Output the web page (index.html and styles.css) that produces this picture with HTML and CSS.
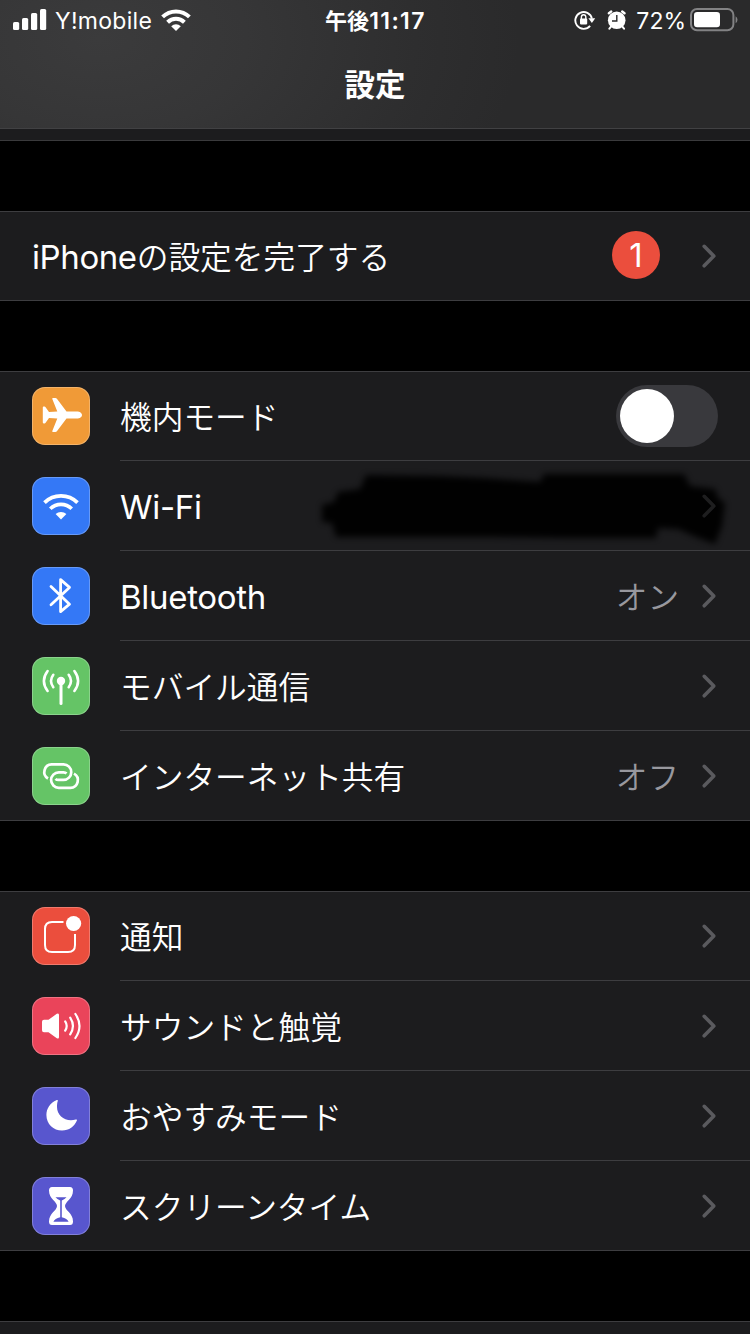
FILE: index.html
```html
<!DOCTYPE html>
<html lang="ja">
<head>
<meta charset="utf-8">
<title>設定</title>
<link rel="stylesheet" href="styles.css">
</head>
<body>
<svg class="defs" width="0" height="0">
  <symbol id="chevron" viewBox="0 0 16 26"><path d="M3.2 3.3 12.8 13.1 3.2 22.8" fill="none" stroke="currentColor" stroke-width="3.6" stroke-linecap="round" stroke-linejoin="round"/></symbol>
</svg>
<header class="header">
  <div class="status">
    <div class="status-left">
      <svg class="signal" width="34" height="22" viewBox="0 0 34 22" fill="#fff"><rect x="0" y="13" width="6.2" height="8" rx="1.6"/><rect x="9" y="9" width="6.2" height="12" rx="1.6"/><rect x="18" y="4" width="6.2" height="17" rx="1.6"/><rect x="27" y="0" width="6.2" height="21" rx="1.6"/></svg>
      <span class="carrier">Y!mobile</span>
      <svg class="wifi-small" width="30" height="22" viewBox="0 0 30 22"><g fill="none" stroke="#fff" stroke-width="4"><path d="M1.6 7.9A19.2 19.2 0 0 1 28.4 7.9"/><path d="M6.6 13.2A12 12 0 0 1 23.4 13.2"/></g><path d="M15 22 10.2 17.2A7 7 0 0 1 19.8 17.2Z" fill="#fff"/></svg>
    </div>
    <div class="clock"><span class="clock-ja">午後</span><span class="clock-time">11:17</span></div>
    <div class="status-right">
      <svg class="lock" width="22" height="20" viewBox="0 0 22 20"><path d="M16.1 15.9A8.4 8.4 0 1 1 17.9 8.6" fill="none" stroke="#fff" stroke-width="1.9"/><path d="M14.4 8.2H21.2L17.9 13Z" fill="#fff"/><rect x="6" y="8.6" width="7.2" height="5.8" rx=".8" fill="#fff"/><path d="M7.4 9V7a2.2 2.2 0 0 1 4.4 0V9" fill="none" stroke="#fff" stroke-width="1.4"/></svg>
      <svg class="alarm" width="20" height="20" viewBox="0 0 20 20"><circle cx="9.7" cy="10.3" r="8.800" fill="#fff"/><path d="M1.900 3.200 4.200 1.500M17.500 3.200 15.200 1.500" stroke="#fff" stroke-width="2.4" stroke-linecap="round"/><path d="M4 16.6 2.400 18.600M15.4 16.6 17 18.600" stroke="#fff" stroke-width="2" stroke-linecap="round"/><path d="M9.8 5V11H5" fill="none" stroke="#2b2b2c" stroke-width="1.4"/></svg>
      <span class="percent">72%</span>
      <svg class="battery" width="48" height="24" viewBox="0 0 48 24"><rect x="1" y="1" width="42.4" height="21.2" rx="6" fill="none" stroke="#828284" stroke-width="2"/><rect x="4" y="4" width="26" height="15.2" rx="3.2" fill="#fff"/><path d="M45.6 8.2a4.2 4.2 0 0 1 0 7Z" fill="#828284"/></svg>
    </div>
  </div>
  <h1 class="title">設定</h1>
</header>
<div class="strip"></div>

<main>
  <section class="group">
    <div class="row row-plain">
      <span class="label"><span class="latin latin-inline">iPhone</span>の設定を完了する</span>
      <span class="badge">1</span>
      <svg class="chevron"><use href="#chevron"/></svg>
    </div>
  </section>

  <section class="group">
    <div class="row">
      <svg class="icon orange" viewBox="0 0 58 58"><path fill="#fff" d="M21 11h2.3q1 0 1.6.8L34.5 24.4H45c2.700 0 5 1.600 5 3.600s-2.300 3.600-5 3.600H34.500L24.900 44.200q-.6.8-1.600.8H21q-1 0-.7-1L25.300 31.400 17 30.900 13.600 35.800q-.4.600-1.200.6H11.600q-.8 0-.8-.8V20.400q0-.8.8-.8h.8q.8 0 1.200.6L17 25.100 25.300 24.600 20.300 12q-.3-1 .7-1Z"/></svg>
      <div class="body"><span class="label">機内モード</span><span class="toggle"><span class="knob"></span></span></div>
    </div>
    <div class="row">
      <svg class="icon blue" viewBox="0 0 58 58"><g fill="none" stroke="#fff" stroke-width="3.700"><path d="M12.500 25.600A23.500 23.500 0 0 1 45.500 25.600"/><path d="M18.300 31.700A15.200 15.200 0 0 1 39.700 31.700"/></g><path d="M29 42.600 23.600 37.100A7.800 7.800 0 0 1 34.400 37.100Z" fill="#fff"/></svg>
      <div class="body"><span class="label latin">Wi-Fi</span>
        <svg class="scribble" viewBox="0 0 440 90"><g class="soft"><path d="M12 40 24 37 28 27 50 24 56 10 130 11 175 13 230 17 234 9 374 9 380 21 405 24 408 33 415 38 412 61 405 79 386 72 368 64 348 63 346 73 260 73 180 72 26 72 22 58 12 57Z"/></g></svg>
        <svg class="chevron covered"><use href="#chevron"/></svg>
      </div>
    </div>
    <div class="row">
      <svg class="icon blue" viewBox="0 0 58 58"><path d="M19 19.400 37.500 37.200 28.600 44.600V12.600L37.500 20.400 19 37.800" fill="none" stroke="#fff" stroke-width="2.800" stroke-linecap="round" stroke-linejoin="round"/></svg>
      <div class="body"><span class="label latin">Bluetooth</span><span class="value">オン</span><svg class="chevron"><use href="#chevron"/></svg></div>
    </div>
    <div class="row">
      <svg class="icon green" viewBox="0 0 58 58"><circle cx="29" cy="24" r="4.200" fill="#fff"/><g fill="none" stroke="#fff" stroke-linecap="round"><path d="M29 25V46.500" stroke-width="3"/><g stroke-width="2.600"><path d="M21.300 17.800Q16.700 24 21.300 30.200M36.700 17.800Q41.300 24 36.700 30.200M15.600 14Q8.200 24 15.600 34M42.400 14Q49.800 24 42.400 34"/></g></g></svg>
      <div class="body"><span class="label">モバイル通信</span><svg class="chevron"><use href="#chevron"/></svg></div>
    </div>
    <div class="row">
      <svg class="icon green" viewBox="0 0 58 58"><g fill="none" stroke="#fff" stroke-width="2.700"><path d="M16 31.500A7.600 7.600 0 0 1 19.600 17.400H31.500A7.600 7.600 0 0 1 31.500 32.900H26.500Q24.500 32.900 23.500 31.800"/><path d="M42 26.600A7.600 7.600 0 0 1 38.400 40.800H26.800A7.600 7.600 0 0 1 26.800 25.400H31.500Q33.500 25.400 34.500 26.500"/></g></svg>
      <div class="body"><span class="label">インターネット共有</span><span class="value">オフ</span><svg class="chevron"><use href="#chevron"/></svg></div>
    </div>
  </section>

  <section class="group">
    <div class="row">
      <svg class="icon red" viewBox="0 0 58 58"><path d="M31.500 14.900H20Q13 14.900 13 22V38Q13 45 20 45H36Q43 45 43 38V27" fill="none" stroke="#fff" stroke-width="2"/><circle cx="41.600" cy="16.500" r="7.600" fill="#fff"/></svg>
      <div class="body"><span class="label">通知</span><svg class="chevron"><use href="#chevron"/></svg></div>
    </div>
    <div class="row">
      <svg class="icon pink" viewBox="0 0 58 58"><path d="M12 22.800H16.500L24.800 16.800Q27 15.600 27 18V40Q27 42.400 24.800 41.200L16.500 35.200H12Q10 35.200 10 33.200V24.800Q10 22.800 12 22.800Z" fill="#fff"/><g fill="none" stroke="#fff" stroke-width="2.200" stroke-linecap="round"><path d="M33.200 24.400Q36.200 29 33.200 33.600M38.200 20.600Q43.700 29 38.200 37.400M43.400 17Q51.600 29 43.400 41"/></g></svg>
      <div class="body"><span class="label">サウンドと触覚</span><svg class="chevron"><use href="#chevron"/></svg></div>
    </div>
    <div class="row">
      <svg class="icon purple" viewBox="0 0 58 58"><path d="M24.800 13C17.600 16 14.400 22 14.400 28 14.400 37 21.600 43.600 30 43.600 37 43.600 42.600 39.500 44.900 33.600 45.200 32.600 44.600 32.200 43.800 32.500 34 35.500 25 29 25 20 25 17.500 25.200 15.800 25.800 14 26 13.200 25.500 12.700 24.800 13Z" fill="#fff"/></svg>
      <div class="body"><span class="label">おやすみモード</span><svg class="chevron"><use href="#chevron"/></svg></div>
    </div>
    <div class="row">
      <svg class="icon purple" viewBox="0 0 58 58"><path d="M20 10H38Q41 10 41 13.500C41 22 33 24.500 33 29S41 36 41 44.500Q41 48 38 48H20Q17 48 17 44.500C17 36 25 33.500 25 29S17 22 17 13.500Q17 10 20 10Z" fill="#fff"/><path d="M23.500 20.300H34.500Q33 22.300 29.800 23.600V40.300Q35.200 41.300 36.600 44.800H21.400Q22.800 41.300 28.200 40.300V23.600Q25 22.300 23.500 20.300Z" fill="#5856ce"/></svg>
      <div class="body"><span class="label">スクリーンタイム</span><svg class="chevron"><use href="#chevron"/></svg></div>
    </div>
  </section>
  <section class="group group-next"></section>
</main>
</body>
</html>
```

FILE: styles.css
```css
* { box-sizing: border-box; }
body {
  margin: 0;
  width: 750px;
  height: 1334px;
  overflow: hidden;
  background: #000;
  color: #fff;
  font-family: "Noto Sans CJK JP", sans-serif;
}
.defs { position: absolute; }
.header {
  height: 129px;
  border-bottom: 1px solid #414143;
  background: radial-gradient(ellipse 420px 260px at 100px 40px, #3b3b3c 0%, #363637 35%, #2e2e2f 75%, #2a2a2b 100%);
}
.status {
  display: grid;
  grid-template-columns: 1fr auto 1fr;
  align-items: center;
  height: 40px;
  padding: 0 12px 0 13px;
  font-family: Inter, sans-serif;
}
.status-left, .status-right { display: flex; align-items: center; }
.status-right { justify-content: flex-end; }
.carrier { margin-left: 8px; padding-top: 2px; font-size: 23px; letter-spacing: 0.3px; }
.wifi-small { margin-left: 9px; }
.clock { display: flex; align-items: center; padding-top: 2px; }
.clock-ja {
  padding-bottom: 4px;
  font-family: "Noto Sans CJK JP", sans-serif;
  font-size: 22px;
  font-weight: 700;
  line-height: 20px;
}
.clock-time { font-size: 23px; font-weight: 600; line-height: 24px; letter-spacing: 1.4px; }
.alarm { margin-left: 11px; }
.percent { margin-left: 9px; padding-top: 2px; font-size: 23px; }
.battery { margin-left: 4px; }
.title {
  margin: 0;
  height: 88px;
  line-height: 86px;
  font-size: 30.5px;
  font-weight: 700;
  text-align: center;
}
.strip { height: 12px; background: #1c1c1e; border-bottom: 1px solid #3a3a3c; }
main { display: flex; flex-direction: column; gap: 70px; padding-top: 70px; }
.group {
  background: linear-gradient(#3d3d40, #3d3d40) top / 100% 1px no-repeat #1c1c1e;
}
.row {
  display: flex;
  align-items: center;
  height: 90px;
  padding-left: 32px;
}
.row-plain { padding-right: 32px; border-bottom: 1px solid #3d3d40; }
.row:last-child { border-bottom: 1px solid #3d3d40; }
.icon {
  flex: none;
  width: 58px;
  height: 58px;
  margin-right: 30px;
  border-radius: 13px;
  box-shadow: inset 0 0 0 1px rgba(255, 255, 255, 0.25);
}
.body {
  position: relative;
  flex: 1;
  display: flex;
  align-items: center;
  height: 90px;
  padding-right: 32px;
  border-bottom: 1px solid #3d3d40;
}
.row:last-child .body { height: 89px; border-bottom: 0; }
.label {
  flex: 1;
  padding-bottom: 2px;
  font-size: 31.7px;
  font-weight: 350;
  line-height: 44px;
  white-space: nowrap;
}
.row-plain .label { padding-bottom: 0; }
.latin {
  padding: 2px 0 0;
  font-family: Inter, sans-serif;
  font-size: 33px;
  font-weight: 400;
  letter-spacing: -0.3px;
}
.latin-inline { letter-spacing: -0.4px; }
.value {
  margin-right: 22px;
  padding-bottom: 2px;
  color: #98989e;
  font-size: 31.6px;
  font-weight: 350;
  line-height: 44px;
}
.chevron { flex: none; width: 16px; height: 26px; margin-right: 1px; color: #5a5a5e; }
.covered { position: relative; color: #1e1e1f; }
.badge {
  width: 48px;
  height: 48px;
  margin: -2px 41px 0 0;
  border-radius: 50%;
  background: #eb4e3d;
  font: 33px/48px Inter, sans-serif;
  text-align: center;
}
.toggle { width: 102px; height: 62px; padding: 4px; border-radius: 31px; background: #39393d; }
.knob { display: block; width: 54px; height: 54px; border-radius: 50%; background: #fff; }
.scribble { position: absolute; right: 0; top: 4px; width: 440px; height: 90px; }
.soft { filter: blur(3px); opacity: 0.95; }
.orange { background: #f09a37; }
.blue { background: #3478f6; }
.green { background: #65c466; }
.red { background: #eb4e3d; }
.pink { background: #ea445a; }
.purple { background: #5856ce; }
.group-next { height: 20px; }
```
